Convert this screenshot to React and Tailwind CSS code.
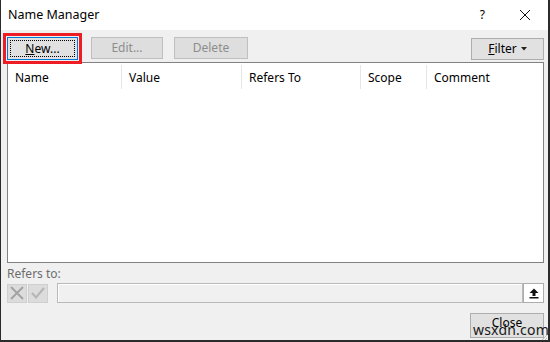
import React from 'react';

const font = { fontFamily: '"Noto Sans", "Open Sans", sans-serif' };

const columns = [
    { label: 'Name', w: 'w-[114px]' },
    { label: 'Value', w: 'w-[120px]' },
    { label: 'Refers To', w: 'w-[119px]' },
    { label: 'Scope', w: 'w-[66px]' },
    { label: 'Comment', w: 'flex-1' },
];

const NameManager = () => {
    return (
        <div style={font} className="w-[550px] h-[342px] flex flex-col border-l border-r-2 border-b-2 border-[#2b2b2b] bg-[#f0f0f0] text-[12px] text-black overflow-hidden">
            {/* Title bar */}
            <div className="h-[30px] bg-white flex items-center shrink-0">
                <span className="ml-[7px] text-[12.5px]">Name Manager</span>
                <span className="ml-auto mr-[34px] text-[12px]">?</span>
                <svg width="12" height="12" viewBox="0 0 12 12" className="mr-[17px]">
                    <path d="M1 1 L11 11 M11 1 L1 11" stroke="#111" strokeWidth="1" fill="none" />
                </svg>
            </div>

            {/* Button row */}
            <div className="flex items-start h-[32px] shrink-0 relative z-10">
                <div className="ml-[2px] mt-[3px] w-[79px] h-[31px] border-[3px] border-[#ee1c25] p-px">
                    <div className="w-full h-full border border-[#0078d7] bg-[#e1e1e1] p-[2px]">
                        <div className="w-full h-full border border-dotted border-black flex items-center justify-center">
                            <span><span className="underline">N</span>ew...</span>
                        </div>
                    </div>
                </div>
                <div className="ml-[9px] mt-[7px] w-[72px] h-[22px] border border-[#bfbfbf] bg-[#dedede] text-[#8d8d8d] flex items-center justify-center">
                    Edit...
                </div>
                <div className="ml-[11px] mt-[7px] w-[74px] h-[22px] border border-[#bfbfbf] bg-[#dedede] text-[#8d8d8d] flex items-center justify-center">
                    Delete
                </div>
                <div className="ml-auto mr-[4px] mt-[8px] w-[73px] h-[22px] border border-[#adadad] bg-[#e1e1e1] flex items-center justify-center gap-[4px]">
                    <span><span className="underline">F</span>ilter</span>
                    <svg width="6" height="4" viewBox="0 0 6 4">
                        <path d="M0 0 L6 0 L3 3.5 Z" fill="#222" />
                    </svg>
                </div>
            </div>

            {/* Names list */}
            <div className="ml-[6px] mr-[4px] h-[201px] border border-[#828282] bg-white shrink-0">
                <div className="flex h-[26px] pt-[2px]">
                    {columns.map((c) => (
                        <div key={c.label} className={`${c.w} h-[24px] flex items-center pl-[7px] pt-[2px] border-r border-[#e5e5e5] last:border-r-0`}>
                            {c.label}
                        </div>
                    ))}
                </div>
            </div>

            {/* Refers to */}
            <div className="ml-[6px] mt-[2px] h-[17px] flex items-center text-[#6d6d6d]">Refers to:</div>
            <div className="flex items-center mt-[1px] h-[20px] shrink-0">
                <div className="ml-[6px] w-[20px] h-[19px] border border-[#cfcfcf] bg-[#dcdcdc] flex items-center justify-center">
                    <svg width="14" height="14" viewBox="0 0 14 14">
                        <path d="M1 1 L13 13 M13 1 L1 13" stroke="#a3a3a3" strokeWidth="2" fill="none" />
                    </svg>
                </div>
                <div className="ml-px w-[20px] h-[19px] border border-[#cfcfcf] bg-[#dcdcdc] flex items-center justify-center">
                    <svg width="14" height="12" viewBox="0 0 14 12">
                        <path d="M1 6 L5 10.5 L13 1" stroke="#b5b5b5" strokeWidth="2" fill="none" />
                    </svg>
                </div>
                <div className="ml-[9px] flex-1 h-[20px] border border-[#b9b9b9] bg-[#f0f0f0] shadow-[inset_1px_1px_0_#ffffff]" />
                <div className="mr-[4px] w-[21px] h-[20px] border border-[#adadad] bg-white flex items-center justify-center">
                    <svg width="10" height="11" viewBox="0 0 10 11">
                        <path d="M5 0.5 L9.5 5 L6.5 5 L6.5 8 L3.5 8 L3.5 5 L0.5 5 Z" fill="#111" />
                        <rect x="0.5" y="9" width="9" height="1.5" fill="#111" />
                    </svg>
                </div>
            </div>

            {/* Close */}
            <div className="flex mt-[10px] relative">
                <div className="ml-auto mr-[4px] w-[74px] h-[25px] border border-[#adadad] bg-[#e1e1e1] flex justify-center pt-[1px] relative">
                    <span className="leading-[16px]">Close</span>
                    <span className="absolute left-[2px] top-[9px] text-[14px] text-[#1a1a1a] leading-none tracking-[0.2px]">wsxdn.com</span>
                </div>
                <svg width="8" height="8" viewBox="0 0 8 8" className="absolute right-0 bottom-[-4px]">
                    <path d="M7 1 L1 7 M7 4 L4 7" stroke="#bdbdbd" strokeWidth="1" />
                </svg>
            </div>
        </div>
    );
};

export default function App() {
    return <NameManager />;
}
